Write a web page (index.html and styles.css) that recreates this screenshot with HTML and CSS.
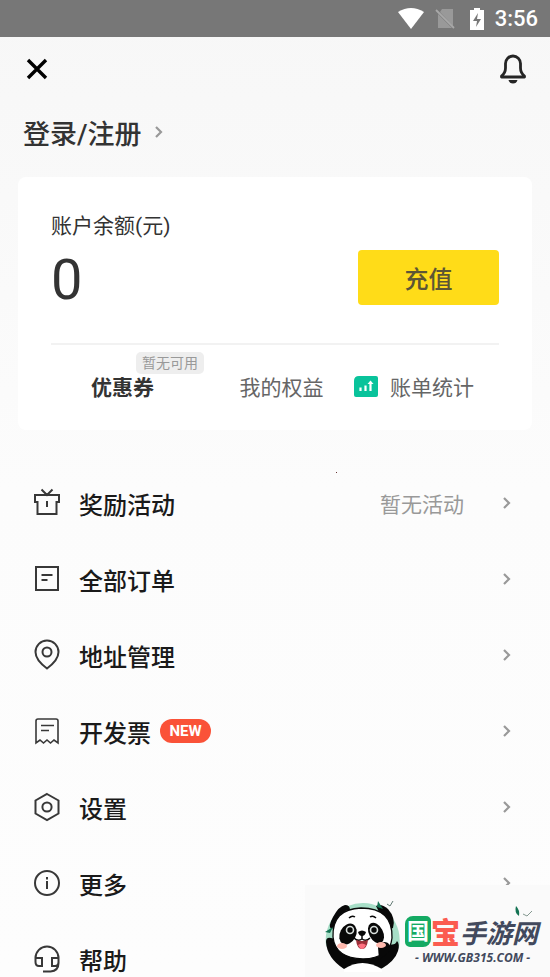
FILE: index.html
```html
<!DOCTYPE html>
<html lang="zh-CN">
<head>
<meta charset="utf-8">
<meta name="viewport" content="width=device-width, initial-scale=1">
<title>我的账户</title>
<link rel="stylesheet" href="styles.css">
</head>
<body>
<svg class="defs" aria-hidden="true">
  <symbol id="chevron" viewBox="0 0 10 14"><path d="M2 2l5 5-5 5" fill="none" stroke="currentColor" stroke-width="2.2"/></symbol>
</svg>
<div class="status">
  <svg width="28" height="22" viewBox="0 0 28 22"><path d="M1 4Q14-4 27 4L14 21z" fill="#fff"/></svg>
  <svg class="sim" width="20" height="22" viewBox="0 0 20 22"><path d="M7 1h11v17L5 4zM3 6l14 14H3z" fill="#999"/><path d="M1 2l18 18" stroke="#a8a8a8" stroke-width="1.8"/></svg>
  <svg class="battery" width="16" height="24" viewBox="0 0 16 24"><path d="M1 3h4V1h6v2h4v20H1z" fill="#fff"/><path d="M9 6l-5 8h4l-1 6 5-8H8z" fill="#777"/></svg>
  <time>3:56</time>
</div>
<header class="top">
  <button aria-label="关闭"><svg width="22" height="22" viewBox="0 0 22 22"><path d="M2 2l18 18M20 2L2 20" stroke="#000" stroke-width="3.4"/></svg></button>
  <button aria-label="通知"><svg width="28" height="32" viewBox="0 0 28 32"><path d="M2.500 23q4-3 4-8v-4.500a7.500 7.500 0 0 1 15 0V15q0 5 4 8v1h-23z" fill="none" stroke="#252525" stroke-width="2.800" stroke-linejoin="round"/><path d="M9.500 27h9q-1 3.500-4.500 3.500T9.500 27z" fill="#252525"/></svg></button>
</header>
<main>
  <a class="login" href="#">登录/注册 <svg width="10" height="14"><use href="#chevron"/></svg></a>
  <section class="card">
    <div class="balance">
      <div><div class="caption">账户余额(元)</div><div class="amount">0</div></div>
      <button class="recharge">充值</button>
    </div>
    <nav class="tabs">
      <a class="coupon" href="#">优惠券<span class="tip">暂无可用</span></a>
      <a href="#">我的权益</a>
      <a class="bill" href="#"><svg width="24" height="21" viewBox="0 0 24 21"><path d="M5 0h17q2 0 2 2v17q0 2-2 2H2q-2 0-2-2V5q0-5 5-5z" fill="#09c39b"/><path d="M6.500 11.500V15M11.500 9.500V15M16.500 7v8" stroke="#fff" stroke-width="2.200"/><path d="M13.500 8L16.500 4.500 19.500 8z" fill="#fff"/></svg>账单统计</a>
    </nav>
  </section>
  <nav class="menu">
    <a href="#"><svg class="icon" viewBox="0 0 28 32"><path d="M2 8h24v7h-2.500v12h-19V15H2zM14 14v6M8.500 2.500L14 8l5.500-5.500" /></svg><span>奖励活动</span><small>暂无活动</small><svg class="go"><use href="#chevron"/></svg></a>
    <a href="#"><svg class="icon" viewBox="0 0 28 32"><path d="M3 4h22v23H3zM8.500 12h11M8.500 17h6"/></svg><span>全部订单</span><svg class="go"><use href="#chevron"/></svg></a>
    <a href="#"><svg class="icon" viewBox="0 0 28 32"><path d="M14 29.500C8 25 2.500 19 2.500 13a11.500 11.500 0 0 1 23 0c0 6-5.500 12-11.500 16.500z"/><circle cx="14" cy="13" r="4.500"/></svg><span>地址管理</span><svg class="go"><use href="#chevron"/></svg></a>
    <a href="#"><svg class="icon thin" viewBox="0 0 28 32"><path d="M3 28V6q0-2 2-2h18q2 0 2 2v22l-4-3-3.500 3-3.500-3-3.500 3L7 25zM8 10.500h13M8 15.500h8"/></svg><span>开发票</span><b class="new">NEW</b><svg class="go"><use href="#chevron"/></svg></a>
    <a href="#"><svg class="icon" viewBox="0 0 28 32"><path d="M14 3l11.500 6.500v13L14 29 2.500 22.500v-13z"/><circle cx="14" cy="16" r="4.600"/></svg><span>设置</span><svg class="go"><use href="#chevron"/></svg></a>
    <a href="#"><svg class="icon" viewBox="0 0 28 32"><circle cx="14" cy="16" r="12"/><path d="M14 14v8M14 10v2.500"/></svg><span>更多</span><svg class="go"><use href="#chevron"/></svg></a>
    <a href="#"><svg class="icon" viewBox="0 0 28 32"><path d="M2.500 19v-4a11.500 11.500 0 0 1 23 0v5q0 8-8 8.500H10M2.500 15H9v8H6q-3.500 0-3.500-4zM25.500 15H19v8h3q3.500 0 3.500-4z"/></svg><span>帮助</span><svg class="go"><use href="#chevron"/></svg></a>
  </nav>
</main>
<i class="speck"></i>
<aside class="brand">
  <svg class="panda" width="78" height="74" viewBox="0 0 78 74">
    <path d="M2 47A37 37 0 1 1 75 49Q68 60 59 70H19Q8 60 2 47z" fill="#a7dec7"/>
    <g fill="#080808">
      <path d="M7 31Q4 28 9 19 15 8 21 7q5 0 5 5L13 29z"/>
      <path d="M52 8q5-3 12 3 8 9 5 19l-5 2z"/>
      <path d="M2 44q0-5 5-4 7 0 10 12l21 9 15-3q4-15 12-12 6 2 8-3 3 3 1 10Q71 63 57 71H20Q3 60 2 44z"/>
    </g>
    <path d="M9 39Q8 11 37 10q32 0 31 30Q66 60 39 61 11 60 9 39z" fill="#fff" stroke="#080808" stroke-width="1.300"/>
    <path d="M20 71q18-12 38 0v3H20z" fill="#fff"/>
    <path d="M54 49q3-7 10-4 5 5 0 10l-9 7z" fill="#080808"/>
    <g fill="#080808">
      <ellipse cx="24" cy="36" rx="8" ry="11" transform="rotate(28 24 36)"/>
      <ellipse cx="52" cy="35" rx="7" ry="11" transform="rotate(-28 52 35)"/>
      <path d="M34 34q4-3 8 0-1 4-4 4t-4-4z"/>
    </g>
    <g fill="#080808" stroke="#d8dfdc" stroke-width="1.600"><circle cx="26" cy="32" r="3.500"/><circle cx="50" cy="32" r="3.500"/></g>
    <path d="M38 37v4M30 40q4 4 8 1 4 3 8-1M25 20q3-3 6-1M46 19q3-2 6 1" fill="none" stroke="#080808" stroke-width="1.500"/>
    <path d="M32 42q6 2 12 0-1 9-6 9t-6-9z" fill="#9c3039"/><path d="M34 47q4-3 8 0-2 4-4 4t-4-4z" fill="#ff7181"/>
    <ellipse cx="18" cy="48" rx="5" ry="3" fill="#ffb9ae"/><ellipse cx="57" cy="47" rx="5" ry="3" fill="#ffb9ae"/>
    <path d="M54 3l5 8-6-2zM1 34l8-5-3 6z" fill="#147353"/><path d="M63 6l3 2 3-5" fill="none" stroke="#637a74"/>
  </svg>
  <div class="words">
    <div class="name"><span class="green">国</span><span class="red">宝</span><span class="slate">手游网</span></div>
    <div class="url">- WWW.GB315.COM -</div>
  </div>
  <svg class="leaf" width="20" height="14" viewBox="0 0 20 14"><path d="M2 0q4 4 3 10Q0 7 2 0z" fill="#147353"/><path d="M9 8l4 2 5-5" fill="none" stroke="#849890"/></svg>
</aside>
</body>
</html>
```

FILE: styles.css
```css
* { box-sizing: border-box; }
body {
  margin: 0;
  height: 100vh;
  overflow: hidden;
  background: linear-gradient(#f7f7f7, #fcfcfc 50%, #fdfdfd);
  font-family: Roboto, "Noto Sans CJK SC", sans-serif;
  color: #333;
}
a { color: inherit; text-decoration: none; }
button { border: 0; padding: 0; background: none; font: inherit; color: inherit; }
svg { display: block; flex: none; }
.defs { position: absolute; width: 0; height: 0; }
.status {
  display: flex;
  align-items: center;
  justify-content: flex-end;
  height: 37px;
  padding-right: 12px;
  background: #777;
  color: #fff;
}
.status svg { margin-right: 2px; }
.status time { font-size: 22px; font-weight: 500; line-height: 38px; }
.status .sim { margin: 0 0 0 8px; }
.status .battery { margin: 0 10px 0 14px; }
.top {
  display: flex;
  justify-content: space-between;
  align-items: center;
  height: 64px;
  padding: 0 23px 0 26px;
}
.login {
  display: flex;
  align-items: center;
  gap: 12px;
  height: 62px;
  margin-left: 23px;
  font-size: 27px;
  font-weight: 500;
}
.login svg { color: #999; }
.card {
  margin: 14px 18px 0;
  padding: 32px 33px 0;
  height: 253px;
  background: #fff;
  border-radius: 8px;
}
.balance {
  display: flex;
  justify-content: space-between;
  align-items: flex-end;
  height: 136px;
  padding-bottom: 38px;
  border-bottom: 2px solid #f2f2f2;
}
.caption { font-size: 21px; line-height: 32px; margin-bottom: 6px; }
.amount { font-size: 56px; line-height: 64px; margin-bottom: -7px; }
.recharge {
  width: 141px;
  height: 55px;
  border-radius: 4px;
  background: #ffdc18;
  color: #5c5635;
  font-size: 24px;
  font-weight: 500;
}
.tabs {
  display: grid;
  grid-template-columns: 143px 1fr 130px;
  align-items: center;
  height: 82px;
  font-size: 21px;
  color: #666;
}
.tabs a { text-align: center; }
.tabs .coupon { position: relative; color: #333; font-weight: 700; }
.tabs .bill { display: flex; gap: 12px; justify-content: flex-end; align-items: center; margin-right: 25px; white-space: nowrap; }
.tip {
  position: absolute;
  left: 85px;
  top: -19px;
  padding: 0 6px;
  border-radius: 5px;
  background: #eee;
  color: #999;
  font-size: 14px;
  font-weight: 400;
  line-height: 22px;
  white-space: nowrap;
}
.menu { padding: 35px 38px 0 33px; }
.menu a {
  display: flex;
  align-items: center;
  height: 76px;
  color: #1a1a1a;
  font-size: 24px;
  font-weight: 500;
}
.icon { width: 28px; height: 32px; margin-right: 18px; fill: none; stroke: #383838; stroke-width: 2; }
.icon.thin { stroke-width: 1.6; }
.go { width: 10px; height: 14px; margin-left: auto; color: #999; }
.menu small { margin-left: auto; margin-right: 38px; color: #999; font-size: 21px; font-weight: 400; }
.menu small + .go { margin-left: 0; }
.new {
  width: 51px;
  margin-left: 9px;
  border-radius: 12px;
  background: #fa5238;
  color: #fff;
  font-size: 15px;
  font-weight: 700;
  line-height: 24px;
  text-align: center;
}
.speck { position: absolute; left: 336px; top: 472px; width: 1px; height: 1px; background: #633; }
.brand {
  position: fixed;
  right: 0;
  bottom: 0;
  display: flex;
  width: 245px;
  height: 92px;
  padding: 13px 0 0 19px;
  background: #fafafa;
}
.words { display: flex; flex-direction: column; margin-left: 3px; padding-top: 13px; font-style: italic; font-weight: 700; }
.name { display: flex; align-items: center; height: 40px; white-space: nowrap; }
.green {
  width: 26px;
  border-radius: 8px 5px;
  background: #14aa63;
  color: #fff;
  font-size: 22px;
  font-style: normal;
  line-height: 31px;
  text-align: center;
}
.red { font-size: 29px; color: #fb5c50; font-style: normal; font-weight: 900; }
.slate { font-size: 26px; color: #42495d; }
.url { margin: 0 0 0 10px; color: #42495d; font: italic 700 12px/14px "Open Sans", sans-serif; white-space: nowrap; }
.leaf { position: absolute; right: 16px; top: 21px; }
```
